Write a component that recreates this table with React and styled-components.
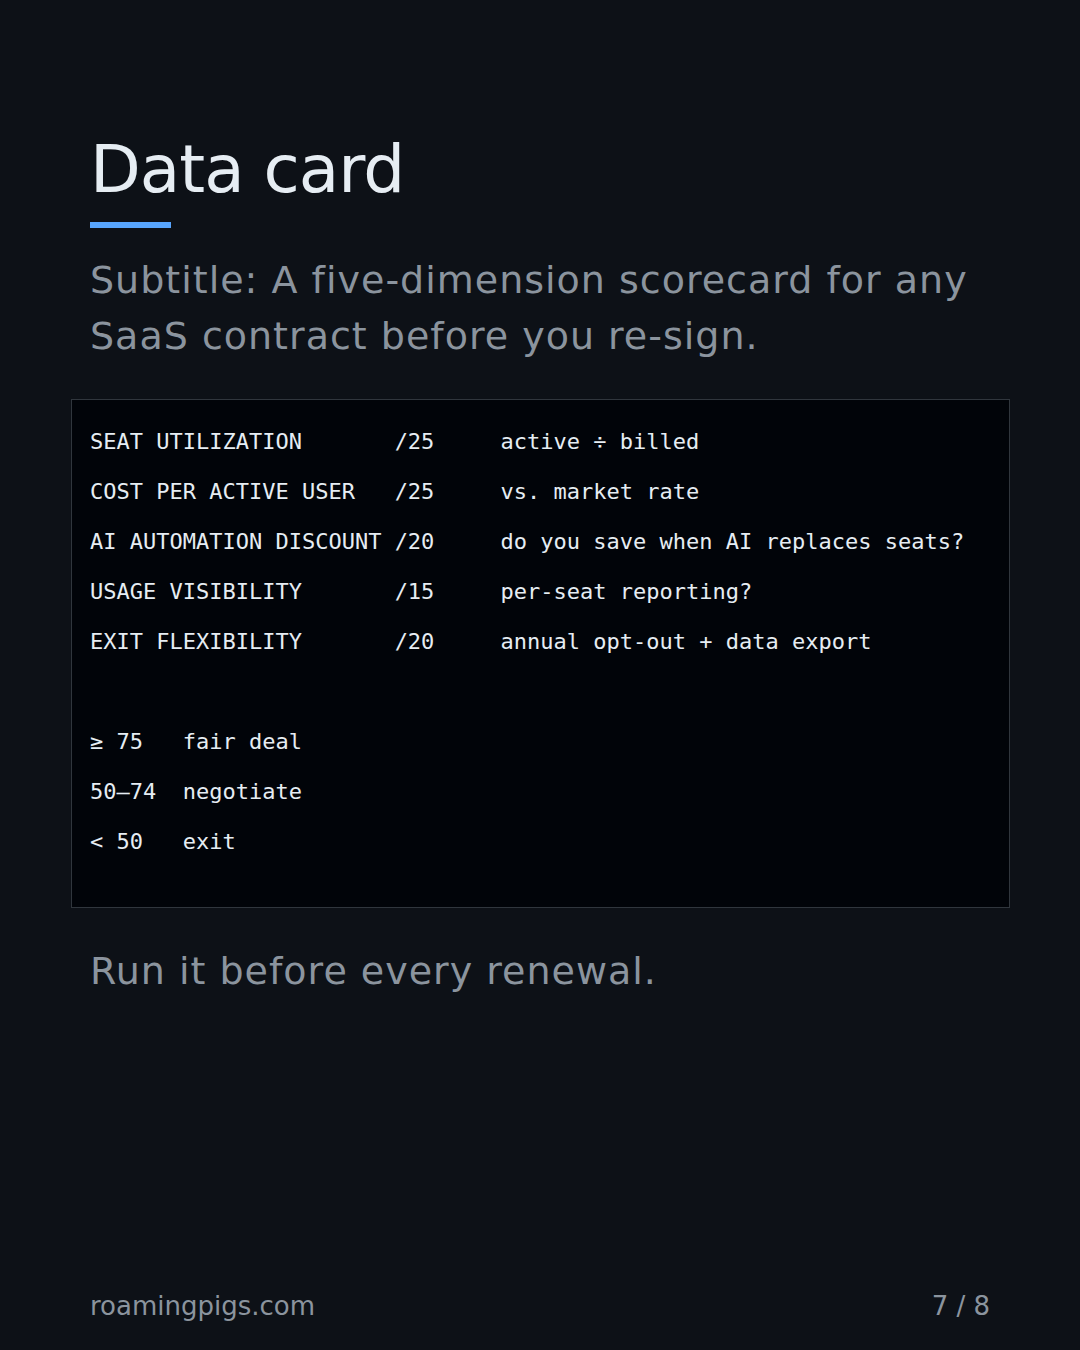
import styled, { createGlobalStyle } from "styled-components";

const GlobalStyle = createGlobalStyle`
  html, body {
    margin: 0;
    padding: 0;
    background: #0d1117;
  }
  body {
    font-family: "DejaVu Sans", sans-serif;
  }
`;

const criteria = [
  { name: "SEAT UTILIZATION", max: "/25", note: "active ÷ billed" },
  { name: "COST PER ACTIVE USER", max: "/25", note: "vs. market rate" },
  { name: "AI AUTOMATION DISCOUNT", max: "/20", note: "do you save when AI replaces seats?" },
  { name: "USAGE VISIBILITY", max: "/15", note: "per-seat reporting?" },
  { name: "EXIT FLEXIBILITY", max: "/20", note: "annual opt-out + data export" },
];

const verdicts = [
  { range: "≥ 75", label: "fair deal" },
  { range: "50–74", label: "negotiate" },
  { range: "< 50", label: "exit" },
];

function App() {
  return (
    <>
      <GlobalStyle />
      <Page>
        <Title>Data card</Title>
        <Accent />
        <Subtitle>
          Subtitle: A five-dimension scorecard for any SaaS contract before you re-sign.
        </Subtitle>

        <CodeBox>
          {criteria.map((c) => (
            <ScoreRow key={c.name}>
              <Cell>{c.name}</Cell>
              <Cell>{c.max}</Cell>
              <Cell>{c.note}</Cell>
            </ScoreRow>
          ))}
          <Blank />
          {verdicts.map((v) => (
            <VerdictRow key={v.range}>
              <Cell>{v.range}</Cell>
              <Cell>{v.label}</Cell>
            </VerdictRow>
          ))}
        </CodeBox>

        <Closing>Run it before every renewal.</Closing>

        <Footer>
          <span>roamingpigs.com</span>
          <span>7 / 8</span>
        </Footer>
      </Page>
    </>
  );
}

const Page = styled.div`
  min-height: 100vh;
  box-sizing: border-box;
  display: flex;
  flex-direction: column;
  padding: 130px 90px 28px;
`;

const Title = styled.h1`
  margin: 0;
  font-size: 66px;
  font-weight: 400;
  letter-spacing: -1px;
  line-height: 1.2;
  color: #e6edf3;
`;

const Accent = styled.div`
  width: 81px;
  height: 6px;
  background: #58a6ff;
  margin-top: 13px;
`;

const Subtitle = styled.p`
  margin: 24px 0 0;
  font-size: 38px;
  letter-spacing: 1px;
  line-height: 56px;
  color: #8b949e;
`;

const CodeBox = styled.div`
  margin: 35px -20px 0 -19px;
  padding: 17px 18px 40px;
  background: #010409;
  border: 1px solid #30363d;
  font-family: "DejaVu Sans Mono", monospace;
  font-size: 22px;
  line-height: 50px;
  color: #e6edf3;
`;

const ScoreRow = styled.div`
  display: grid;
  grid-template-columns: 23ch 8ch auto;
  white-space: pre;
`;

const VerdictRow = styled.div`
  display: grid;
  grid-template-columns: 7ch auto;
  white-space: pre;
`;

const Cell = styled.span``;

const Blank = styled.div`
  height: 50px;
`;

const Closing = styled.p`
  margin: 35px 0 0;
  font-size: 38px;
  letter-spacing: 1px;
  line-height: 56px;
  color: #8b949e;
`;

const Footer = styled.div`
  margin-top: auto;
  display: flex;
  justify-content: space-between;
  font-size: 26px;
  line-height: 1.2;
  color: #8b949e;
`;

export default App;
